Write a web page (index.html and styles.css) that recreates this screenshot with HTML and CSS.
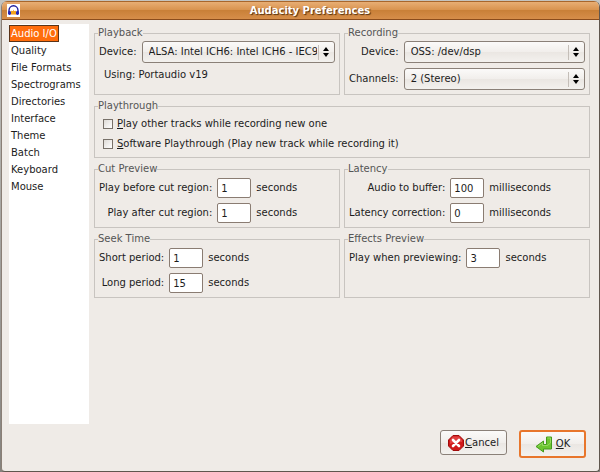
FILE: index.html
```
<!DOCTYPE html>
<html lang="en">
<head>
  <meta charset="utf-8">
  <title>Audacity Preferences</title>
  <link rel="stylesheet" href="styles.css">
</head>
<body>

<form class="window">

  <header class="titlebar">
    <svg class="logo" width="13" height="13" viewBox="0 0 13 13">
      <rect width="13" height="13" fill="#fff"/>
      <path d="M2 8V6.500a4.500 4.800 0 0 1 9 0V8" fill="none" stroke="#1c1c9c" stroke-width="1.400"/>
      <path d="M3.500 8l1-1.500 1 2 1-3 1 3 1-2 1 1.500v2.500h-6z" fill="#f28c1c"/>
      <path d="M4 7h5v3H4z" fill="#f4a41c"/>
      <rect x="1" y="7" width="3" height="4" rx="1.400" fill="#2525b4"/>
      <rect x="9" y="7" width="3" height="4" rx="1.400" fill="#2525b4"/>
    </svg>
    <h1>Audacity Preferences</h1>
  </header>

  <div class="content">
    <ul class="pages">
      <li><a class="current" href="#audio">Audio I/O</a></li>
      <li><a href="#quality">Quality</a></li>
      <li><a href="#formats">File Formats</a></li>
      <li><a href="#spectrograms">Spectrograms</a></li>
      <li><a href="#directories">Directories</a></li>
      <li><a href="#interface">Interface</a></li>
      <li><a href="#theme">Theme</a></li>
      <li><a href="#batch">Batch</a></li>
      <li><a href="#keyboard">Keyboard</a></li>
      <li><a href="#mouse">Mouse</a></li>
    </ul>

    <div class="groups">
      <fieldset>
        <legend>Playback</legend>
        <div class="devices">
          <label for="playdev">Device:</label>
          <select id="playdev"><option>ALSA: Intel ICH6: Intel ICH6 - IEC958 (hw:0,4)</option></select>
          <p class="using">Using: Portaudio v19</p>
        </div>
      </fieldset>

      <fieldset>
        <legend>Recording</legend>
        <div class="devices">
          <label for="recdev">Device:</label>
          <select id="recdev"><option>OSS: /dev/dsp</option></select>
          <label for="channels">Channels:</label>
          <select id="channels"><option>2 (Stereo)</option></select>
        </div>
      </fieldset>

      <fieldset class="wide">
        <legend>Playthrough</legend>
        <div class="checks">
          <label><input type="checkbox"><span><u>P</u>lay other tracks while recording new one</span></label>
          <label><input type="checkbox"><span><u>S</u>oftware Playthrough (Play new track while recording it)</span></label>
        </div>
      </fieldset>

      <fieldset>
        <legend>Cut Preview</legend>
        <div class="fields">
          <label for="before">Play before cut region:</label>
          <input type="text" id="before" value="1"><span>seconds</span>
          <label for="after">Play after cut region:</label>
          <input type="text" id="after" value="1"><span>seconds</span>
        </div>
      </fieldset>

      <fieldset>
        <legend>Latency</legend>
        <div class="fields">
          <label for="buffer">Audio to buffer:</label>
          <input type="text" id="buffer" value="100"><span>milliseconds</span>
          <label for="correction">Latency correction:</label>
          <input type="text" id="correction" value="0"><span>milliseconds</span>
        </div>
      </fieldset>

      <fieldset>
        <legend>Seek Time</legend>
        <div class="fields">
          <label for="short">Short period:</label>
          <input type="text" id="short" value="1"><span>seconds</span>
          <label for="long">Long period:</label>
          <input type="text" id="long" value="15"><span>seconds</span>
        </div>
      </fieldset>

      <fieldset>
        <legend>Effects Preview</legend>
        <div class="fields">
          <label for="preview">Play when previewing:</label>
          <input type="text" id="preview" value="3"><span>seconds</span>
        </div>
      </fieldset>
    </div>
  </div>

  <footer class="buttons">
    <button type="button">
      <svg width="16" height="16" viewBox="0 0 16 16">
        <path d="M5 .5h6L15.500 5v6L11 15.500H5L.5 11V5z" fill="#d01818" stroke="#a00c0c"/>
        <path d="M5 1.500h6L14 5v2Q8 6 2 9V5z" fill="#e04040"/>
        <path d="M5 5l6 6M11 5l-6 6" stroke="#fff" stroke-width="2.600" stroke-linecap="round"/>
      </svg>
      <span><u>C</u>ancel</span>
    </button>
    <button type="submit" class="default">
      <svg width="18" height="17" viewBox="0 0 18 17">
        <path d="M11.500 1h5v12H8.500v3L1 10.500 8.500 5v3.500h3z" fill="#6cc630" stroke="#449a1c" stroke-linejoin="round"/>
        <path d="M12.500 2h3v5l-3 2.500H7.500V7L3 10.500" fill="none" stroke="#94da60"/>
      </svg>
      <span><u>O</u>K</span>
    </button>
  </footer>

</form>

</body>
</html>
```
FILE: styles.css
```
* { box-sizing: border-box; }
body {
margin: 0;
padding: 1px 0 0 1px;
min-height: 100vh;
display: flex;
background: linear-gradient(#c4c4c0, #85827e);
font-family: "DejaVu Sans", Verdana, sans-serif;
font-size: 10px;
line-height: 14px;
color: #1c1c1c;
}
.window {
flex: 1;
display: flex;
flex-direction: column;
border: 1px solid #5f564e;
border-top: 0;
border-left-color: #8a7f76;
border-radius: 6px 6px 4px 4px;
background: #efebe7;
overflow: hidden;
}
.titlebar {
display: flex;
align-items: center;
height: 19px;
padding: 0 5px;
border-top: 1px solid #a8662c;
border-bottom: 1px solid #8a4c1c;
background: linear-gradient(#e8ae74, #d99450 45%, #c98038 50%, #d68e4a);
}
h1 {
flex: 1;
margin: 0;
padding-left: 6px;
text-align: center;
font-size: 10px;
line-height: 14px;
color: #fff;
text-shadow: 1px 1px 1px #53300f;
}
.content {
flex: 1;
display: flex;
gap: 5px;
padding: 4px 9px 0 7px;
}
.pages {
width: 80px;
margin: 0;
padding: 1px 0;
list-style: none;
background: #fff;
}
.pages li { height: 17px; }
.pages a {
display: inline-block;
padding: 0 1px;
border: 1px solid transparent;
line-height: 15px;
color: #1c1c1c;
text-decoration: none;
white-space: nowrap;
}
.pages .current {
background: #ff6d0c;
border-color: #5a3418;
color: #fff;
}
.groups {
flex: 1;
display: grid;
grid-template-columns: 1fr 1fr;
gap: 4px;
align-content: start;
padding-top: 2px;
}
fieldset {
min-width: 0;
margin: 0;
padding: 1px 4px 4px;
border: 1px solid #c8c4c0;
}
.wide { grid-column: 1 / 3; }
legend {
margin-left: -1px;
padding: 0;
color: #555;
}
.devices {
display: grid;
grid-template-columns: auto 1fr;
gap: 5px;
align-items: center;
}
.devices label, .fields label { text-align: right; }
.using {
grid-column: 1 / 3;
margin: 0;
padding: 0 0 8px 5px;
}
select {
appearance: none;
width: 100%;
min-width: 0;
height: 22px;
padding: 0 17px 0 6px;
border: 1px solid #8a8078;
border-radius: 3px;
background: url("data:image/svg+xml,%3Csvg xmlns='http://www.w3.org/2000/svg' width='16' height='15'%3E%3Cpath d='M.5 0v15' stroke='%23c4beb8'/%3E%3Cpath d='M8 2l3 4H5zM8 12l3-4H5z'/%3E%3C/svg%3E") right 0 center no-repeat, linear-gradient(#fbfaf9, #f1eeeb 50%, #eae6e2 50%, #f3f1ee);
font: inherit;
color: inherit;
}
.checks {
display: flex;
flex-direction: column;
gap: 6px;
padding: 3px 0 2px 4px;
}
.checks label {
display: flex;
align-items: center;
gap: 4px;
}
input[type=checkbox] {
appearance: none;
width: 10px;
height: 10px;
margin: 0;
border: 1px solid #777069;
background: linear-gradient(135deg, #dedad6, #fff);
}
.fields {
display: grid;
grid-template-columns: auto 34px 1fr;
gap: 5px;
align-items: center;
}
input[type=text] {
width: 100%;
height: 20px;
padding: 0 3px;
border: 1px solid #8a7c72;
border-radius: 2px;
background: #fff;
font: inherit;
color: inherit;
}
.fields { padding-top: 1px; }
.buttons {
display: flex;
justify-content: flex-end;
align-items: flex-start;
gap: 12px;
padding: 6px 13px 13px;
}
button {
display: flex;
align-items: center;
justify-content: center;
gap: 1px;
width: 67px;
height: 25px;
padding: 0;
border: 1px solid #8a8078;
border-radius: 3px;
background: linear-gradient(#fbfaf9, #f1eeeb 50%, #eae6e2 50%, #f3f1ee);
font: inherit;
color: inherit;
}
.default {
gap: 3px;
height: 28px;
border: 2px solid #e8762c;
}
```
